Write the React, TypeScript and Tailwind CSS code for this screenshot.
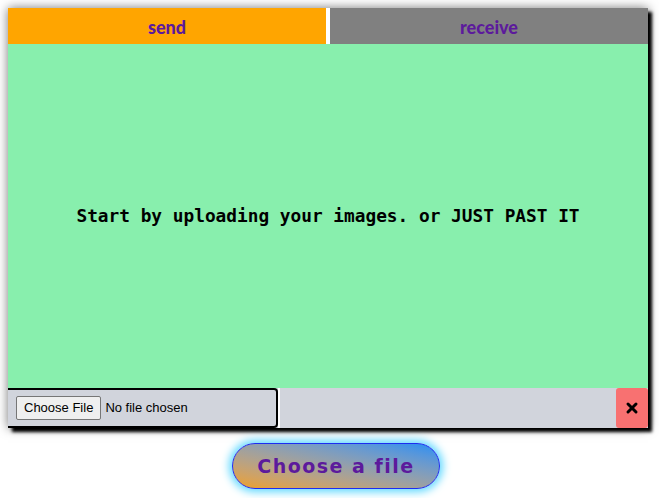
import { X } from 'lucide-react';

export default function App() {
  return (
    <div className="min-h-screen bg-white p-2">
      <div className="flex h-[420px] w-[640px] flex-col bg-[#88efad] shadow-[4px_4px_3px_#000,0_0_10px_#777]">
        <div className="flex h-9 gap-1 bg-white">
          <button className="flex-1 bg-[#ffa500] pt-0.5 font-['Lato',sans-serif] text-lg font-black text-[#5c1a9c]">
            send
          </button>
          <button className="flex-1 bg-[#808080] pt-0.5 font-['Lato',sans-serif] text-lg font-black text-[#5c1a9c]">
            receive
          </button>
        </div>

        <div className="flex flex-1 items-center justify-center">
          <p className="font-['DejaVu_Sans_Mono',monospace] text-[17.8px] font-bold text-black">
            Start by uploading your images. or JUST PAST IT
          </p>
        </div>

        <div className="flex h-10 bg-[#d1d4dc]">
          <label className="flex w-[270px] items-center rounded-r-[4px] border-2 border-l-0 border-black pl-2 font-['Liberation_Sans',sans-serif] text-[13px] text-black">
            <span className="rounded-[2px] border border-[#767676] bg-[#efefef] px-[7px] py-px">
              Choose File
            </span>
            <span className="ml-1">No file chosen</span>
          </label>
          <div className="w-0.5 bg-white" />
          <div className="flex-1" />
          <button className="flex w-8 items-center justify-center rounded-[3px] bg-[#f87171]">
            <X size={16} strokeWidth={4.5} className="text-black" />
          </button>
        </div>
      </div>

      <div className="mt-[15px] flex justify-center pl-[13px]">
        <button className="h-[46px] w-[208px] rounded-full border border-[#1d2cf0] bg-gradient-to-tr from-[#eea010] to-[#1e8ef5] font-['Comic_Sans_MS','DejaVu_Sans',sans-serif] text-[19px] font-bold tracking-[1.5px] text-[#5c1a9c] shadow-[0_0_8px_3px_#5fd8ff]">
          Choose a file
        </button>
      </div>
    </div>
  );
}
